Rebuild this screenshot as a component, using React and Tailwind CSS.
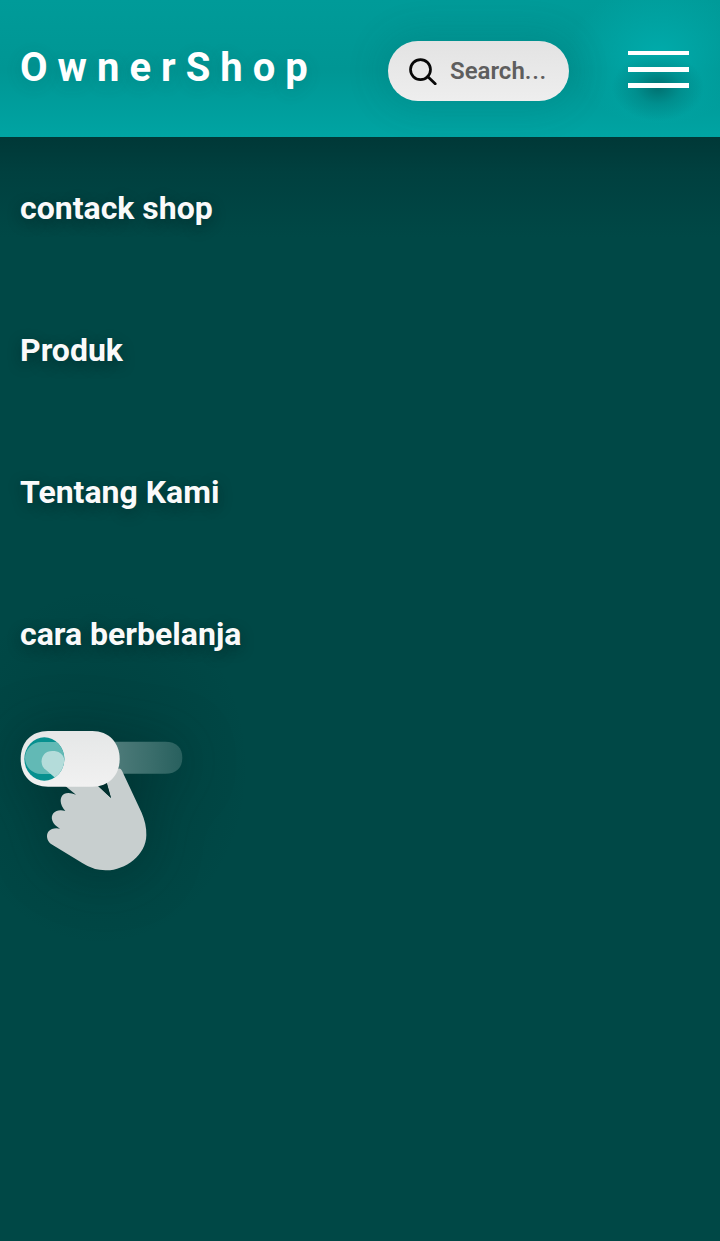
const links = ["contack shop", "Produk", "Tentang Kami", "cara berbelanja"];

function SearchBox() {
  return (
    <div className="mt-[41px] flex h-[60px] w-[181px] items-center rounded-full bg-linear-to-b from-[#e3e3e3] to-[#eeeeee] shadow-[0_0_36px_8px_rgba(0,80,80,0.14)]">
      <svg className="ml-[21px] h-[28px] w-[28px] shrink-0" viewBox="0 0 28 28" fill="none" stroke="#080808">
        <circle cx="11.5" cy="12.6" r="10" strokeWidth="2.7" />
        <path d="M18.6 19.6L26.2 26.8" strokeWidth="2.8" strokeLinecap="round" />
      </svg>
      <span className="ml-[13px] text-[24px] leading-none font-semibold whitespace-nowrap text-[#5e5e5e]">
        Search<span className="font-medium tracking-[0.7px]">...</span>
      </span>
    </div>
  );
}

function MenuButton() {
  return (
    <button
      aria-label="Menu"
      className="mt-[51px] mr-[31px] ml-auto flex h-[37px] w-[61px] flex-col justify-between"
    >
      <span className="h-[4px] w-full bg-white" />
      <span className="h-[5px] w-full bg-white shadow-[0_10px_10px_-5px_rgba(0,75,75,0.65)]" />
      <span className="h-[5px] w-full bg-white" />
    </button>
  );
}

function SwipeToggle() {
  return (
    <svg
      className="mt-[77px] ml-[20px] h-[141px] w-[163px] shrink-0 overflow-visible drop-shadow-[0_4px_28px_rgba(0,30,30,0.35)]"
      viewBox="60 90 489 423"
    >
      <defs>
        <linearGradient id="trail" x1="0" x2="1">
          <stop offset="0" stopColor="#55807f" />
          <stop offset="0.6" stopColor="#3b6e6c" />
          <stop offset="1" stopColor="#28605e" />
        </linearGradient>
        <linearGradient id="pill" x1="0" y1="0" x2="0" y2="1">
          <stop offset="0" stopColor="#e5e7e7" />
          <stop offset="1" stopColor="#f1f1f1" />
        </linearGradient>
        <clipPath id="knob">
          <ellipse cx="133" cy="177" rx="60" ry="65" />
        </clipPath>
      </defs>
      <path d="M300 125H496C529 125 547 143 547 173S529 221 496 221H300Z" fill="url(#trail)" />
      <path
        d="M196 258L228 284Q205 275 192 282C178 290 178 314 196 333Q172 327 160 340C150 352 156 373 180 386Q157 382 146 394C137 405 141 423 152 431L248 490Q282 512 320 511C375 511 439 465 439 405C440 382 434 360 425 338L366 212Q362 204 354 206L318 240L333 294L292 256Z"
        fill="#c8cfcf"
      />
      <path d="M292 256L333 294L320 250Z" fill="#002f2e" />
      <path d="M144 93H277C326 93 359 128 359 177S326 260 277 260H144C94 260 62 228 62 177S94 93 144 93Z" fill="url(#pill)" />
      <g clipPath="url(#knob)">
        <rect x="70" y="110" width="125" height="135" fill="#07908f" />
        <rect x="75" y="126" width="180" height="96" rx="48" fill="#62b9b5" />
        <path d="M132 205C116 184 127 153 157 153C177 153 187 161 192 175L205 245L172 239Z" fill="#b4dcda" />
      </g>
    </svg>
  );
}

export default function App() {
  return (
    <div className="flex h-[1241px] w-[720px] flex-col overflow-hidden bg-[#004846] font-[Roboto,sans-serif]">
      <header className="flex h-[137px] shrink-0 items-start bg-[radial-gradient(ellipse_46px_34px_at_658px_87px,rgba(0,100,100,0.8)_0%,rgba(0,115,115,0.4)_50%,rgba(0,140,140,0)_100%),radial-gradient(ellipse_90px_70px_at_658px_55px,#00abab_0%,transparent_100%),linear-gradient(to_bottom,#009b99_0%,#009694_50%,#00a4a3_100%)]">
        <h1 className="mt-[44px] ml-[20px] w-[368px] text-[40px] leading-[47px] font-bold tracking-[10px] text-white [text-shadow:0_4px_16px_rgba(0,70,70,0.18)]">
          OwnerShop
        </h1>
        <SearchBox />
        <MenuButton />
      </header>
      <main className="flex grow flex-col bg-[radial-gradient(ellipse_150px_180px_at_100px_630px,rgba(0,35,35,0.22),transparent),linear-gradient(to_bottom,#003837_0px,#00403f_35px,#004846_100px)]">
        <nav className="flex flex-col gap-[104px] pt-[52px] pl-[20px]">
          {links.map((label) => (
            <a
              key={label}
              href="#"
              className="text-[32px] leading-[38px] font-bold whitespace-nowrap text-[#fafafa] [text-shadow:0_4px_14px_rgba(0,20,20,0.4)]"
            >
              {label}
            </a>
          ))}
        </nav>
        <SwipeToggle />
      </main>
    </div>
  );
}
